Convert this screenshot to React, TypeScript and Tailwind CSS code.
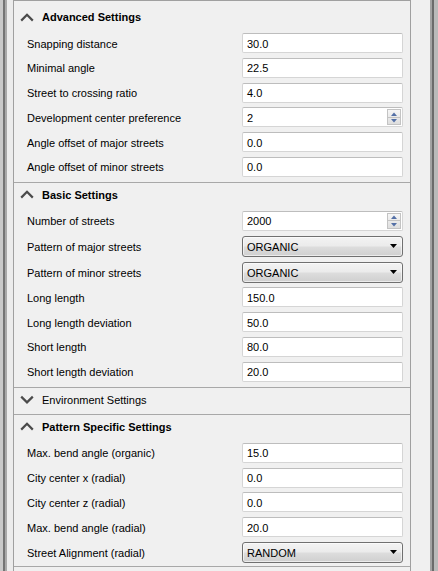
import React from "react";

type Row = { label: string; value: string; kind?: "text" | "spin" | "combo" };
type Section = { title: string; open: boolean; rows: Row[] };

const sections: Section[] = [
  {
    title: "Advanced Settings",
    open: true,
    rows: [
      { label: "Snapping distance", value: "30.0" },
      { label: "Minimal angle", value: "22.5" },
      { label: "Street to crossing ratio", value: "4.0" },
      { label: "Development center preference", value: "2", kind: "spin" },
      { label: "Angle offset of major streets", value: "0.0" },
      { label: "Angle offset of minor streets", value: "0.0" },
    ],
  },
  {
    title: "Basic Settings",
    open: true,
    rows: [
      { label: "Number of streets", value: "2000", kind: "spin" },
      { label: "Pattern of major streets", value: "ORGANIC", kind: "combo" },
      { label: "Pattern of minor streets", value: "ORGANIC", kind: "combo" },
      { label: "Long length", value: "150.0" },
      { label: "Long length deviation", value: "50.0" },
      { label: "Short length", value: "80.0" },
      { label: "Short length deviation", value: "20.0" },
    ],
  },
  { title: "Environment Settings", open: false, rows: [] },
  {
    title: "Pattern Specific Settings",
    open: true,
    rows: [
      { label: "Max. bend angle (organic)", value: "15.0" },
      { label: "City center x (radial)", value: "0.0" },
      { label: "City center z (radial)", value: "0.0" },
      { label: "Max. bend angle (radial)", value: "20.0" },
      { label: "Street Alignment (radial)", value: "RANDOM", kind: "combo" },
    ],
  },
];

function Chevron({ up }: { up: boolean }) {
  return (
    <svg width="14" height="9" viewBox="0 0 14 9" className="shrink-0">
      <polyline
        points={up ? "1.2,7.6 7,1.8 12.8,7.6" : "1.2,1.6 7,7.4 12.8,1.6"}
        fill="none"
        stroke="#4b4b4b"
        strokeWidth="2.2"
      />
    </svg>
  );
}

function TextBox({ value }: { value: string }) {
  return (
    <div className="flex h-[20px] w-[161px] items-center rounded-[2px] border border-[#d5d5d5] border-t-[#bdbdbd] bg-white pl-[4px] text-black">
      <span className="pt-[2px]">{value}</span>
    </div>
  );
}

function SpinBox({ value }: { value: string }) {
  return (
    <div className="flex h-[20px] w-[161px] items-stretch rounded-[2px] border border-[#d5d5d5] border-t-[#bdbdbd] bg-white text-black">
      <div className="flex flex-1 items-center pl-[4px]">
        <span className="pt-[2px]">{value}</span>
      </div>
      <div className="my-[1px] mr-[1px] flex w-[14px] flex-col border border-[#c3c3c3] bg-[linear-gradient(to_bottom,#f6f6f6,#dedede)]">
        <div className="flex flex-1 items-center justify-center border-b border-[#c3c3c3]">
          <svg width="6" height="4" viewBox="0 0 6 4">
            <polygon points="0,4 3,0.5 6,4" fill="#5470a6" />
          </svg>
        </div>
        <div className="flex flex-1 items-center justify-center">
          <svg width="6" height="4" viewBox="0 0 6 4">
            <polygon points="0,0 6,0 3,3.5" fill="#5470a6" />
          </svg>
        </div>
      </div>
    </div>
  );
}

function ComboBox({ value }: { value: string }) {
  return (
    <div className="flex h-[21px] w-[161px] items-center justify-between rounded-[3px] border border-[#707070] bg-[linear-gradient(to_bottom,#f3f3f3_0%,#ebebeb_48%,#dddddd_52%,#cfcfcf_100%)] pl-[4px] pr-[5px] text-black shadow-[inset_0_0_0_1px_rgba(255,255,255,0.6)]">
      <span className="pt-[2px]">{value}</span>
      <svg width="7" height="4" viewBox="0 0 7 4">
        <polygon points="0,0 7,0 3.5,4" fill="#000" />
      </svg>
    </div>
  );
}

function SectionView({ s, first }: { s: Section; first: boolean }) {
  return (
    <div className="flex flex-col">
      <div
        className={
          "flex h-[27px] items-center gap-[8px] border-t pb-[2px] pl-[6px] " +
          (first ? "border-transparent" : "border-[#a8a8a8]")
        }
      >
        <Chevron up={s.open} />
        <span className={s.open ? "pt-[1px] font-bold text-black" : "pt-[1px] text-black"}>{s.title}</span>
      </div>
      {s.open && (
        <div className="flex flex-col gap-[4.8px] pb-[5px] pl-[13px] pr-[7px] pt-[2px]">
          {s.rows.map((r) => (
            <div key={r.label} className="flex items-center justify-between">
              <span className="pt-[2px] text-black">{r.label}</span>
              {r.kind === "spin" ? (
                <SpinBox value={r.value} />
              ) : r.kind === "combo" ? (
                <ComboBox value={r.value} />
              ) : (
                <TextBox value={r.value} />
              )}
            </div>
          ))}
        </div>
      )}
    </div>
  );
}

export default function App() {
  return (
    <div className="flex h-[571px] w-[438px] overflow-hidden bg-[#f0f0f0] font-['Liberation_Sans',Arial,sans-serif] text-[11px] leading-none">
      <div className="w-[3px] shrink-0 bg-[#c9c9c9]" />
      <div className="w-[2px] shrink-0 bg-[#747474]" />
      <div className="w-[2px] shrink-0 bg-[#a9a9a9]" />
      <div className="w-[6px] shrink-0 bg-[#ececec]" />
      <div className="flex w-[398px] shrink-0 flex-col border-l border-r border-t border-[#a0a0a0] pt-[3px]">
        {sections.map((s, i) => (
          <SectionView key={s.title} s={s} first={i === 0} />
        ))}
        <div className="mt-[-2px] border-t border-[#a8a8a8]" />
      </div>
      <div className="w-[19px] shrink-0 bg-[#f0f0f0]" />
      <div className="w-[2px] shrink-0 bg-[#a3a3a3]" />
      <div className="w-[2px] shrink-0 bg-[#6b6b6b]" />
      <div className="w-[4px] shrink-0 bg-[#bababa]" />
    </div>
  );
}
